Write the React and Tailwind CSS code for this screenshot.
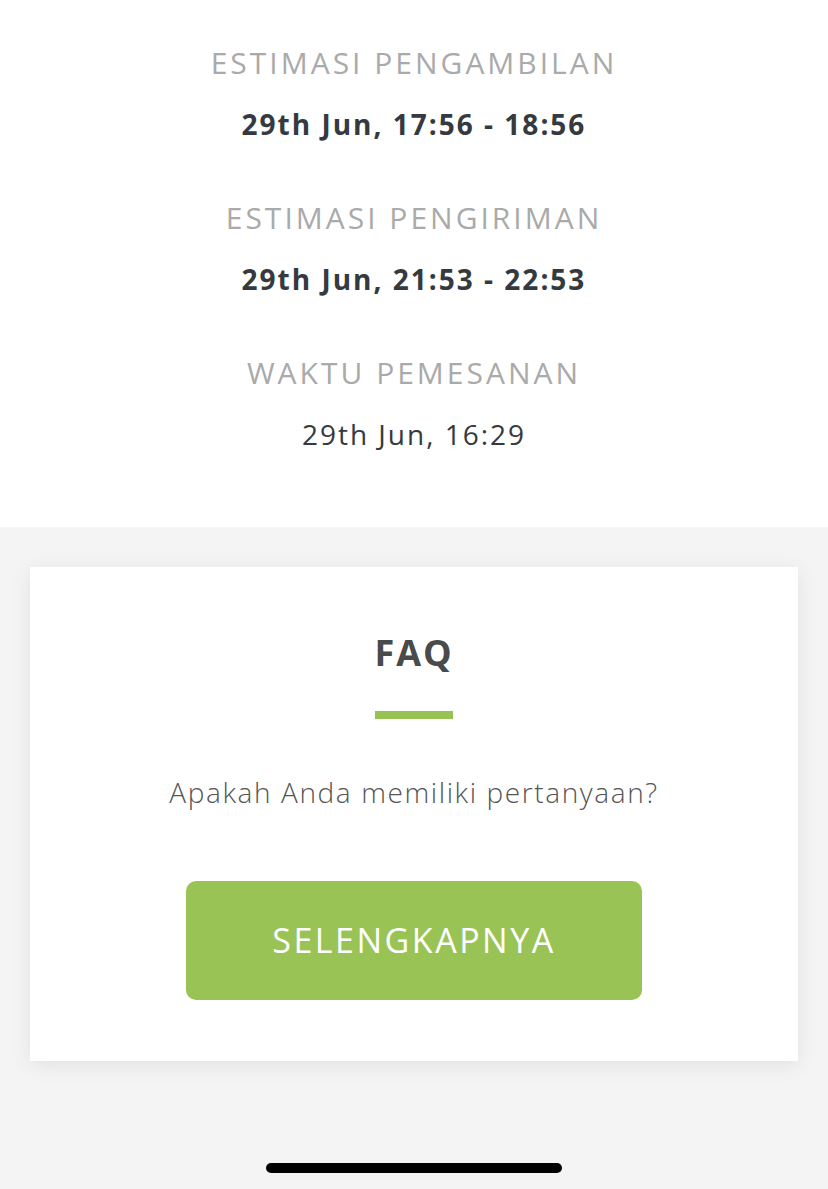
export default function App() {
  const font = { fontFamily: '"Open Sans", "Liberation Sans", sans-serif' };
  const groups = [
    { label: "ESTIMASI PENGAMBILAN", value: "29th Jun, 17:56 - 18:56", bold: true },
    { label: "ESTIMASI PENGIRIMAN", value: "29th Jun, 21:53 - 22:53", bold: true },
    { label: "WAKTU PEMESANAN", value: "29th Jun, 16:29", bold: false },
  ];
  return (
    <div className="min-h-[1189px] w-[828px] bg-[#f4f4f4]" style={font}>
      <div className="flex h-[527px] flex-col items-center gap-[54px] bg-white pt-[43px]">
        {groups.map((g) => (
          <div key={g.label} className="flex flex-col items-center gap-[21px]">
            <div className="text-[30px] leading-[40px] tracking-[3px] text-[#aaaaaa]">{g.label}</div>
            <div
              className={
                g.bold
                  ? "text-[28px] font-bold leading-[40px] tracking-[2px] text-[#343a40]"
                  : "text-[28px] font-normal leading-[40px] tracking-[2px] text-[#343a40]"
              }
            >
              {g.value}
            </div>
          </div>
        ))}
      </div>
      <div className="mx-[30px] mt-[40px] flex flex-col items-center bg-white pt-[62px] pb-[61px] shadow-[0_4px_20px_rgba(0,0,0,0.08)]">
        <div className="text-[36px] font-bold leading-[48px] tracking-[2px] text-[#4a4a4a]">FAQ</div>
        <div className="mt-[34px] h-[8px] w-[78px] bg-[#97c355]" />
        <div className="mt-[53px] text-[28px] font-light leading-[40px] tracking-[1.6px] text-[#555555]">
          Apakah Anda memiliki pertanyaan?
        </div>
        <div className="mt-[69px] flex h-[119px] w-[456px] items-center justify-center rounded-[10px] bg-[#99c455] text-[34px] tracking-[2.5px] text-white">
          SELENGKAPNYA
        </div>
      </div>
      <div className="flex justify-center pt-[102px] pb-[16px]">
        <div className="h-[10px] w-[296px] rounded-full bg-black" />
      </div>
    </div>
  );
}
